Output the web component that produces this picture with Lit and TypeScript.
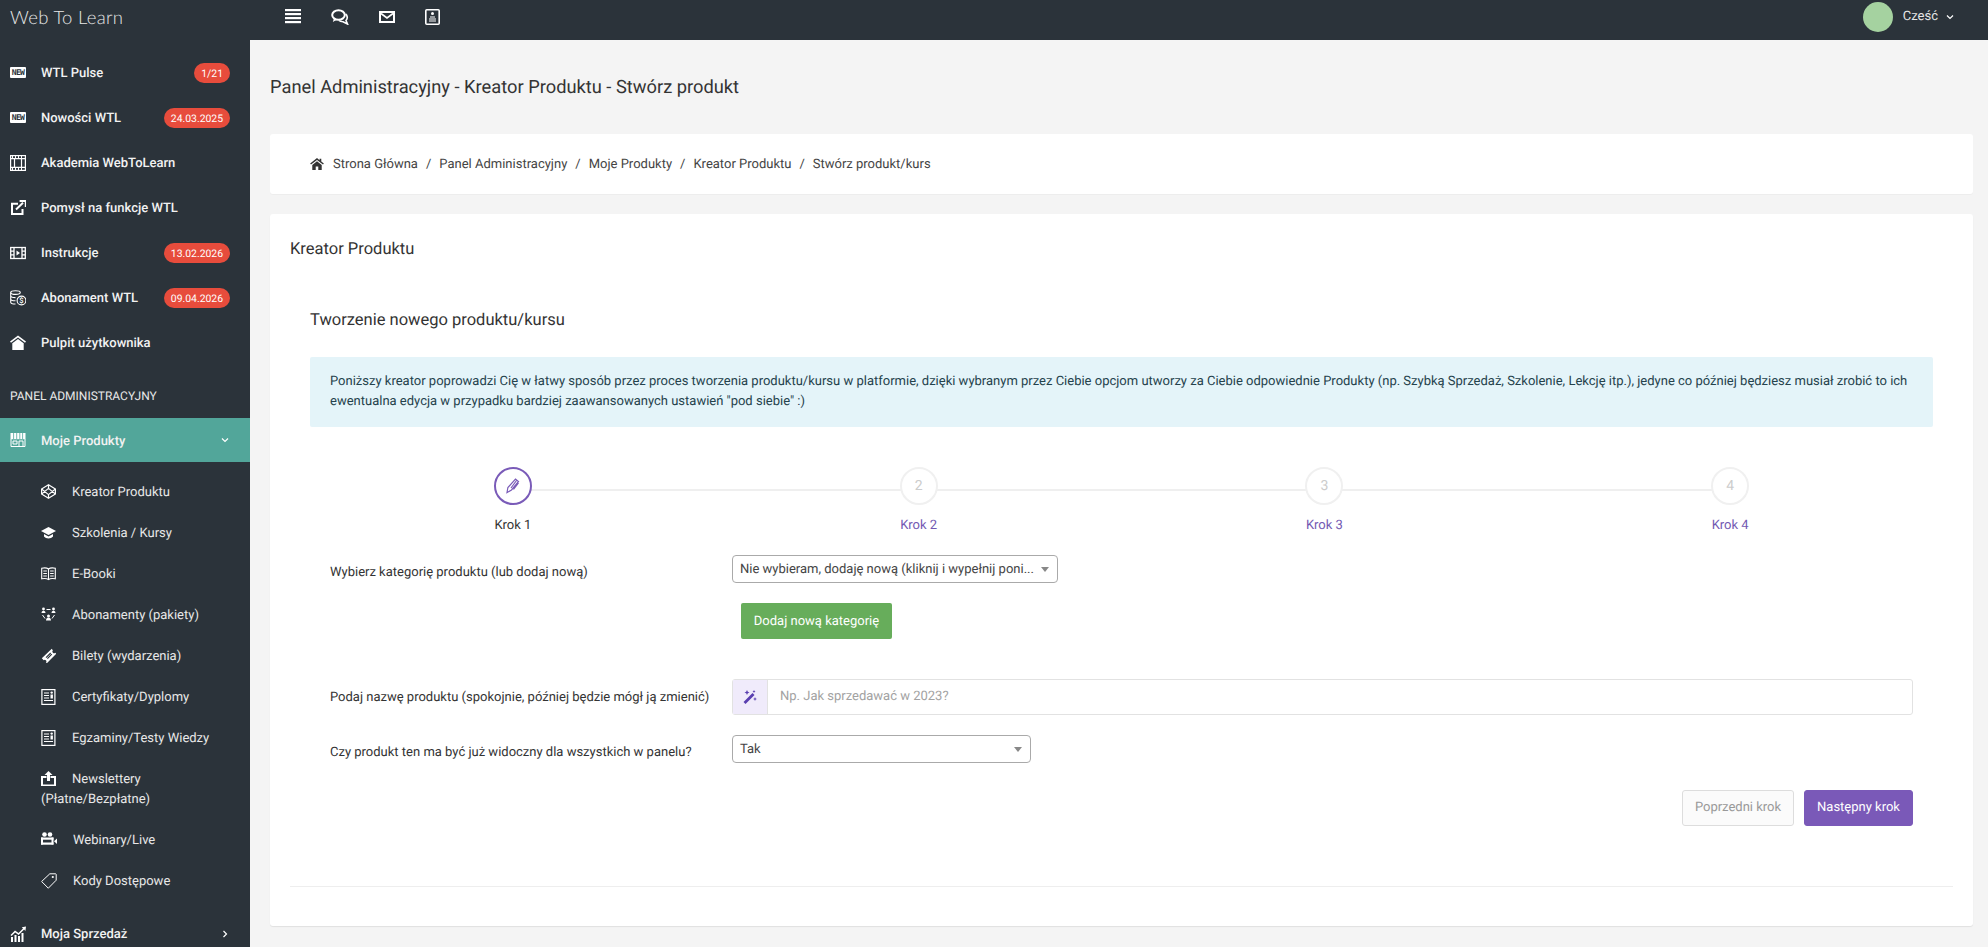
import { LitElement, html, css, svg } from "lit";
import { customElement } from "lit/decorators.js";

const icons: Record<string, any> = {
  menu: svg`<g fill="#fff"><rect x="0" y="0" width="16" height="2.200"/><rect x="0" y="4" width="16" height="2.200"/><rect x="0" y="8" width="16" height="2.200"/><rect x="0" y="12" width="16" height="2.200"/></g>`,
  film: svg`<g fill="none" stroke="#fff" stroke-width="1.200"><rect x=".6" y=".6" width="14.800" height="14.800"/><path d="M0 3.600h16M0 12.400h16M4.500 3.600v8.800M11.500 3.600v8.800"/></g><g fill="#fff"><rect x="2" y="1" width="1" height="2"/><rect x="5" y="1" width="1" height="2"/><rect x="8" y="1" width="1" height="2"/><rect x="11" y="1" width="1" height="2"/><rect x="2" y="13" width="1" height="2"/><rect x="5" y="13" width="1" height="2"/><rect x="8" y="13" width="1" height="2"/><rect x="11" y="13" width="1" height="2"/></g>`,
  ext: svg`<path d="M12.500 9v5H2V3.800h6" fill="none" stroke="#fff" stroke-width="2"/><path d="M6 9.500 13 2.800M9.600 1H15.800V7" fill="none" stroke="#fff" stroke-width="2"/>`,
  play: svg`<g fill="none" stroke="#fff" stroke-width="1.300"><rect x=".7" y="2.500" width="14.600" height="11"/><path d="M4 2.500v11M12 2.500v11M.7 6.200H4M.7 9.800H4M12 6.200h3.300M12 9.800h3.300"/></g><path d="M6.500 5.500 10 8l-3.500 2.500z" fill="#fff"/>`,
  coins: svg`<g fill="none" stroke="#fff" stroke-width="1.100"><ellipse cx="5.500" cy="2.600" rx="4.800" ry="1.800"/><path d="M.7 2.600v9.600c0 1 2 1.800 4.800 1.800M.7 5.800c0 1 2 1.800 4.800 1.800M.7 9c0 1 2 1.800 4.800 1.800"/><circle cx="11.500" cy="10.500" r="4.400"/></g><text x="11.500" y="13.200" font-size="7.500" fill="#fff" text-anchor="middle" font-family="Roboto">$</text>`,
  home: svg`<path d="M8 .6 0 6.500l1 1.200L8 2.600l7 5.100 1-1.200z" fill="#fff"/><path d="M8 4 2.300 8.200V15h11.400V8.200z" fill="#fff"/>`,
  store: svg`<path d="M.5 1h15v6.200H.5z" fill="#fff"/><path d="M3.600 1v6M6.700 1v6M9.800 1v6M12.600 1v6" stroke="#52a69a" stroke-width=".8"/><path d="M1 7v7.500h14V7M3 9h4v3H3zM9 9h4v5.500H9z" fill="none" stroke="#fff" stroke-width="1"/>`,
  cube: svg`<g fill="none" stroke="#fff" stroke-width="1.200" stroke-linejoin="round"><path d="M7.500 .8 14.400 5v5l-6.900 4.200L.6 10V5z"/><path d="M7.500 .8v3.600M7.500 10.600v3.600M.6 5l6.900 5.600L14.400 5M.6 10l6.900-5.600 6.900 5.600"/></g>`,
  cap: svg`<path d="M7.500 2 0 6l7.500 4L15 6z" fill="#fff"/><path d="M3 9v2.500c1 1.300 2.800 2 4.500 2s3.500-.7 4.500-2V9L7.500 11.400z" fill="#fff"/>`,
  book: svg`<g fill="none" stroke="#fff" stroke-width="1.100"><path d="M7.500 3C6 1.800 3 1.700.7 2.200v10.600c2.300-.5 5.300-.4 6.800.8 1.500-1.200 4.500-1.300 6.800-.8V2.200C12 1.700 9 1.800 7.500 3zM7.500 3v10.600"/><path d="M2.300 5h3.600M2.300 7.500h3.600M2.300 10h3.600M9.100 5h3.600M9.100 7.500h3.600M9.100 10h3.600"/></g>`,
  people: svg`<g fill="#fff"><circle cx="2.500" cy="2" r="1.400"/><path d="M.5 6c0-1.500 1-2.300 2-2.300s2 .8 2 2.300z"/><circle cx="12.500" cy="2" r="1.400"/><path d="M10.500 6c0-1.500 1-2.300 2-2.300s2 .8 2 2.300z"/><circle cx="7.500" cy="9" r="1.500"/><path d="M5 13.500c0-1.800 1.200-2.900 2.500-2.900s2.500 1.100 2.500 2.900z"/></g><path d="M5.500 2.500h4M1.500 8l2.500 3.500M13.500 8 11 11.500" stroke="#fff" fill="none"/>`,
  ticket: svg`<path d="M10.800 .8 .8 10.200l1.900 2a1.600 1.600 0 0 1 2.300 2.200l.9.800 9.300-9.500-1-1a1.600 1.600 0 0 1-2.300-2.300z" fill="#fff"/><path d="M5 9.600 9.700 5M6.400 10.600l4.400-4.400" stroke="#2b333a" stroke-width="1.100"/>`,
  share: svg`<path d="M5.500 6H1v8.500h13V6H9.500" fill="none" stroke="#fff" stroke-width="2"/><path d="M7.500 0 3.500 4h2.500v6h3V4h2.500z" fill="#fff"/>`,
  cam: svg`<g fill="#fff"><circle cx="3.500" cy="2.500" r="2.300"/><circle cx="9" cy="2.500" r="2.300"/><rect x="0" y="5.500" width="12.500" height="2.200"/><rect x="0" y="10.500" width="12.500" height="2.200"/><rect x="0" y="5.500" width="2" height="7"/><rect x="10.500" y="5.500" width="2" height="7"/><path d="M16 6.500v5.500l-3-2.700z"/></g>`,
  tag: svg`<path d="M8.800.8h5.900a.6.600 0 0 1 .5.500v5.900L7.300 15.200.6 8.500z" fill="none" stroke="#fff" stroke-width="1"/><circle cx="11.800" cy="4" r="1.100" fill="#fff"/>`,
  chart: svg`<g fill="#fff"><rect x="1" y="11" width="2" height="5"/><rect x="4.500" y="9" width="2" height="7"/><rect x="8" y="10" width="2" height="6"/><rect x="11.500" y="7" width="2" height="9"/><path d="M.5 9 5 4.500 8.500 7 13 2.500l-1.200-1.200L16 .6l-.6 4.300-1.300-1.300L8.600 9 5.200 6.400 1.500 10z"/></g>`,
};

const ic = (n: string, size = 16) => html`<svg class="ic" width=${size} height=${size} viewBox="0 0 ${size} ${size}">${icons[n]}</svg>`;
const news = html`<svg class="ic" width="15" height="16" viewBox="0 0 15 16"><rect x=".9" y=".6" width="13" height="14.800" fill="none" stroke="#fff" stroke-width="1.200"/><path d="M3 4h5M3 6.500h5M3 9h5M3 11.500h9" stroke="#fff" stroke-width="1.200"/><rect x="9.500" y="5.500" width="2.400" height="4" fill="#fff"/><circle cx="10.700" cy="3.600" r="1.200" fill="#fff"/></svg>`;

@customElement("app-root")
export class AppRoot extends LitElement {
  static styles = css`
    :host { display: block; height: 100vh; overflow: hidden; background: #f4f4f4; font-family: Roboto, "Noto Sans", sans-serif; font-size: 13px; color: #333; text-rendering: geometricPrecision; }
    * { box-sizing: border-box; }
    .ic { display: block; flex: none; }
    .top { height: 40px; background: #2b333a; display: flex; align-items: center; color: #fff; }
    .logo { width: 285px; padding-left: 10px; font-family: Lato, sans-serif; font-weight: 300; font-size: 18.500px; letter-spacing: .3px; color: #e8e8e8; margin-top: -6px; }
    .tools { display: flex; align-items: center; gap: 30px; margin-top: -7px; }
    .user { margin-left: auto; display: flex; align-items: center; padding-right: 33px; font-size: 13px; color: #e6e6e6; margin-top: -7px;}
    .avatar { width: 30px; height: 30px; border-radius: 50%; background: #a5d2a0; margin-right: 10px; }
    .user svg { margin-left: 7px; }
    .wrap { display: flex; height: 907px; }
    aside { width: 250px; flex: none; background: #2b333a; color: #fff; overflow: hidden; padding-top: 10px; }
    .it { height: 45px; display: flex; align-items: center; padding: 0 20px 0 10px; gap: 15px; font-weight: 500; font-size: 13px; color: #f2f2f2; }
    .tx { padding-top: 2px; }
    .badge { margin-left: auto; background: #e74c3c; color: #fff; border-radius: 10px; height: 20px; line-height: 21px; padding: 0 7px; font-size: 10.400px; font-weight: 400; }
    .new { width: 16px; height: 11px; background: #fff; border-radius: 1px; color: #2b333a; font-size: 8px; font-weight: 700; line-height: 11px; text-align: center; font-family: "DejaVu Sans Mono", monospace; overflow: hidden; flex: none; letter-spacing: -.6px; }
    .sec { height: 53px; padding: 24px 0 0 10px; font-size: 12px; line-height: 14px; color: #e8e8e8; }
    .active { background: #52a69a; height: 44px; }
    .chev { margin-left: auto; }
    .subs { padding: 9px 0 10px; }
    .sub { height: 41px; display: flex; align-items: center; padding-left: 41px; gap: 16px; font-size: 13px; color: #e8e8e8; }
    .sub.two { display: block; height: 61px; padding-top: 12px; line-height: 20px; }
    .sub.two .ic { display: inline-block; vertical-align: -3px; margin-right: 16px; }
    main { flex: 1; min-width: 0; padding: 0 15px 0 20px; }
    h1 { margin: 0; height: 94px; font-size: 18.300px; font-weight: 400; line-height: 96px; color: #333; }
    .crumbs { height: 60px; background: #fff; border-radius: 3px; display: flex; align-items: center; padding-left: 40px; font-size: 13px; color: #444; box-shadow: 0 1px 1px rgba(0,0,0,.03); }
    .crumbs svg { margin-right: 9px; }
    .crumbs i { font-style: normal; margin: 0 8px; }
    .card { margin-top: 20px; height: 712px; background: #fff; border-radius: 3px; box-shadow: 0 1px 1px rgba(0,0,0,.08); padding: 0 20px; }
    h2 { margin: 0; height: 70px; line-height: 72px; font-size: 16.500px; font-weight: 400; color: #333; }
    .inner { padding: 0 20px; height: 602px; }
    h3 { margin: 0; height: 73px; padding-top: 22px; line-height: 30px; font-size: 16.500px; font-weight: 400; color: #333; }
    .alert { height: 70px; background: #e4f4f9; border-radius: 2px; padding: 15px 20px; font-size: 13px; line-height: 20px; color: #24424c; }
    .steps { display: grid; grid-template-columns: repeat(4, 1fr); margin-top: 40px; height: 73px; }
    .step { position: relative; display: flex; flex-direction: column; align-items: center; font-size: 13px; color: #7258b2; }
    .step::before { content: ""; position: absolute; top: 22px; left: 50%; width: 100%; height: 2px; background: #efefef; }
    .step:last-child::before { display: none; }
    .dot { position: relative; width: 38px; height: 38px; border-radius: 50%; border: 2px solid #f0f0f0; background: #fff; display: flex; align-items: center; justify-content: center; color: #ccc; font-size: 14px; margin-bottom: 13px; }
    .step.on { color: #333; }
    .step.on .dot { border-color: #7a5bb8; }
    .form { padding: 0 20px; }
    .row { display: grid; grid-template-columns: 402px 1fr; align-items: center; }
    .first { margin-top: 15px; }
    .second { margin-top: 40px; }
    .third { margin-top: 20px; }
    .lab { font-size: 13px; color: #333; }
    .lab.low { padding-top: 7px; }
    .sel { height: 28px; border: 1px solid #aaa; border-radius: 4px; background: #fff; padding: 0 8px 0 7px; display: flex; align-items: center; font-size: 13px; color: #444; white-space: nowrap; overflow: hidden; }
    .sel::after { content: ""; margin-left: auto; border: 4px solid transparent; border-top: 5px solid #888; border-bottom: 0; flex: none; }
    .s1 { width: 326px; }
    .s2 { width: 299px; }
    .green { display: block; margin: 20px 0 0 9px; width: 151px; height: 36px; background: #67ad5b; color: #fff; border-radius: 2px; text-align: center; line-height: 37px; font-size: 13px; }
    .group { height: 36px; display: flex; border: 1px solid #e2e2e2; border-radius: 3px; }
    .addon { width: 35px; background: #f0ebfb; display: flex; align-items: center; justify-content: center; border-right: 1px solid #e2e2e2; }
    .ph { padding-left: 12px; line-height: 34px; color: #a2a2a2; font-size: 13px; }
    .actions { display: flex; justify-content: flex-end; gap: 10px; margin-top: 27px; }
    .btn { height: 36px; line-height: 34px; border-radius: 3px; font-size: 13px; text-align: center; }
    .prev { width: 112px; background: #fbfbfb; border: 1px solid #ddd; color: #999; }
    .next { width: 109px; background: #7a59b8; color: #fff; border: 1px solid #7a59b8; }
    hr { border: 0; height: 1px; background: #eee; margin: 0; }
  `;

  render() {
    const top = [
      ["new", "WTL Pulse", "1/21"],
      ["new", "Nowości WTL", "24.03.2025"],
      ["film", "Akademia WebToLearn", ""],
      ["ext", "Pomysł na funkcje WTL", ""],
      ["play", "Instrukcje", "13.02.2026"],
      ["coins", "Abonament WTL", "09.04.2026"],
      ["home", "Pulpit użytkownika", ""],
    ];
    const subs = [
      ["cube", "Kreator Produktu"],
      ["cap", "Szkolenia / Kursy"],
      ["book", "E-Booki"],
      ["people", "Abonamenty (pakiety)"],
      ["ticket", "Bilety (wydarzenia)"],
      ["news", "Certyfikaty/Dyplomy"],
      ["news", "Egzaminy/Testy Wiedzy"],
    ];
    const chev = (d: string) => html`<svg class="chev" width="10" height="10" viewBox="0 0 10 10"><path d=${d} fill="none" stroke="#fff" stroke-width="1.200"/></svg>`;
    return html`
      <div class="top">
        <div class="logo">Web To Learn</div>
        <div class="tools">
          <svg class="ic" width="16" height="15" viewBox="0 0 16 15">${icons.menu}</svg>
          <svg class="ic" width="18" height="16" viewBox="0 0 18 16"><ellipse cx="7.500" cy="6" rx="6.300" ry="4.800" fill="none" stroke="#fff" stroke-width="2"/><path d="M3 9.500 1.800 13l4-2.200" fill="#fff"/><path d="M14.500 5c2 1.500 2.500 4.500.5 6.500l1.500 3.500-4.500-2.300c-1.500 0-3-.3-4-1.200" fill="none" stroke="#fff" stroke-width="1.600"/></svg>
          <svg class="ic" width="16" height="12" viewBox="0 0 16 12"><rect x="1" y="1" width="14" height="10" fill="none" stroke="#fff" stroke-width="2"/><path d="M2 2.500 8 7l6-4.500" fill="none" stroke="#fff" stroke-width="1.600"/></svg>
          <svg class="ic" width="15" height="16" viewBox="0 0 15 16"><rect x=".8" y=".8" width="13.400" height="14.400" rx="1" fill="none" stroke="#fff" stroke-width="1.600"/><circle cx="7.500" cy="4.500" r="1.500" fill="#fff"/><path d="M5 8h5M4 10h7M4 12h7" stroke="#fff" stroke-width="1.200"/></svg>
        </div>
        <div class="user">
          <div class="avatar"></div>Cześć
          ${chev("M2 3.500l3 3 3-3")}
        </div>
      </div>
      <div class="wrap">
        <aside>
          ${top.map(([i, t, b]) => html`<div class="it">
            ${i === "new" ? html`<span class="new">NEW</span>` : ic(i)}<span class="tx">${t}</span>
            ${b ? html`<span class="badge">${b}</span>` : ""}
          </div>`)}
          <div class="sec">PANEL ADMINISTRACYJNY</div>
          <div class="it active">${ic("store")}<span class="tx">Moje Produkty</span>${chev("M2 3.500l3 3 3-3")}</div>
          <div class="subs">
            ${subs.map(([i, t]) => html`<div class="sub">${i === "news" ? news : ic(i, 15)}<span class="tx">${t}</span></div>`)}
            <div class="sub two">${ic("share", 15)}<span>Newslettery</span><br /><span>(Płatne/Bezpłatne)</span></div>
            <div class="sub">${ic("cam")}<span class="tx">Webinary/Live</span></div>
            <div class="sub">${ic("tag")}<span class="tx">Kody Dostępowe</span></div>
          </div>
          <div class="it">${ic("chart")}<span class="tx">Moja Sprzedaż</span>${chev("M3.500 2l3 3-3 3")}</div>
        </aside>
        <main>
          <h1>Panel Administracyjny - Kreator Produktu - Stwórz produkt</h1>
          <div class="crumbs">
            <svg width="14" height="12" viewBox="0 0 16 14"><path d="M8 0 0 6.500l1 1.200L8 2.200l7 5.500 1-1.200-3-2.400V1h-2v1.700z" fill="#333"/><path d="M8 3.800 2.500 8.300V14h4V10h3v4h4V8.300z" fill="#333"/></svg>
            Strona Główna<i>/</i>Panel Administracyjny<i>/</i>Moje Produkty<i>/</i>Kreator Produktu<i>/</i>Stwórz produkt/kurs
          </div>
          <div class="card">
            <h2>Kreator Produktu</h2>
            <div class="inner">
              <h3>Tworzenie nowego produktu/kursu</h3>
              <div class="alert">Poniższy kreator poprowadzi Cię w łatwy sposób przez proces tworzenia produktu/kursu w platformie, dzięki wybranym przez Ciebie opcjom utworzy za Ciebie odpowiednie Produkty (np. Szybką Sprzedaż, Szkolenie, Lekcję itp.), jedyne co później będziesz musiał zrobić to ich ewentualna edycja w przypadku bardziej zaawansowanych ustawień "pod siebie" :)</div>
              <div class="steps">
                <div class="step on"><div class="dot"><svg width="18" height="18" viewBox="0 0 18 18"><path d="M3 15.500l.9-5L11.500 2l3 2.500-7 8.500zM7 11l5.500-7.500M9.500 12.500l5-6.500" fill="none" stroke="#7a5bb8" stroke-width="1.200"/></svg></div>Krok 1</div>
                <div class="step"><div class="dot">2</div>Krok 2</div>
                <div class="step"><div class="dot">3</div>Krok 3</div>
                <div class="step"><div class="dot">4</div>Krok 4</div>
              </div>
              <div class="form">
                <div class="row first">
                  <div class="lab low">Wybierz kategorię produktu (lub dodaj nową)</div>
                  <div class="sel s1"><span>Nie wybieram, dodaję nową (kliknij i wypełnij poni...</span></div>
                </div>
                <div class="row"><div></div><div class="green">Dodaj nową kategorię</div></div>
                <div class="row second">
                  <div class="lab">Podaj nazwę produktu (spokojnie, później będzie mógł ją zmienić)</div>
                  <div class="group"><div class="addon"><svg width="14" height="14" viewBox="0 0 14 14"><path d="M.5 12 9.500 3l2 2-9 9zM4 0l.8 1.700 1.700.8-1.700.8L4 5l-.8-1.700-1.700-.8 1.700-.8zM12 7l.6 1.400 1.400.6-1.400.6L12 11l-.6-1.400L10 9l1.400-.6zM11 0l.5 1 1 .5-1 .5-.5 1-.5-1-1-.5 1-.5z" fill="#5a3fb0"/></svg></div><div class="ph">Np. Jak sprzedawać w 2023?</div></div>
                </div>
                <div class="row third">
                  <div class="lab low">Czy produkt ten ma być już widoczny dla wszystkich w panelu?</div>
                  <div class="sel s2"><span>Tak</span></div>
                </div>
                <div class="actions"><div class="btn prev">Poprzedni krok</div><div class="btn next">Następny krok</div></div>
              </div>
            </div>
            <hr />
          </div>
        </main>
      </div>
    `;
  }
}
